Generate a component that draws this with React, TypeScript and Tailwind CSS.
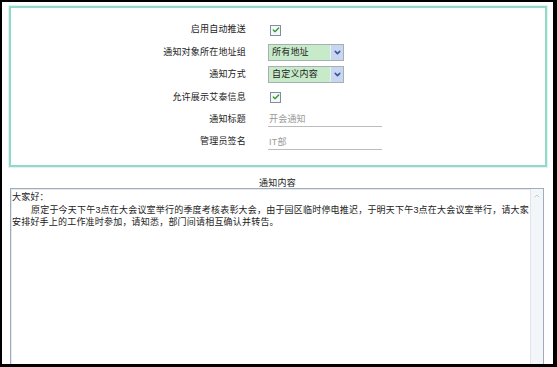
import { Check, ChevronDown, ChevronUp } from 'lucide-react'

const rows: Array<{ label: string; kind: 'check' | 'select' | 'input'; value?: string }> = [
  { label: '启用自动推送', kind: 'check' },
  { label: '通知对象所在地址组', kind: 'select', value: '所有地址' },
  { label: '通知方式', kind: 'select', value: '自定义内容' },
  { label: '允许展示艾泰信息', kind: 'check' },
  { label: '通知标题', kind: 'input', value: '开会通知' },
  { label: '管理员签名', kind: 'input', value: 'IT部' },
]

function CheckBox() {
  return (
    <div className="ml-[2px] w-[11px] h-[11px] border border-[#7f8fa0] bg-[#f4f6f8] flex items-center justify-center">
      <Check className="w-[8px] h-[8px] text-[#2f9a2f]" strokeWidth={4} />
    </div>
  )
}

function Select({ value }: { value: string }) {
  return (
    <div className="w-[76px] h-[17px] border border-[#a5afb5] bg-[#c7ebc9] flex items-center">
      <span className="flex-1 pl-[3px] leading-[15px] text-[#222]">{value}</span>
      <div className="w-[13px] h-[15px] bg-[#c9d7ee] border-l border-[#e8eef8] flex items-center justify-center">
        <ChevronDown className="w-[9px] h-[9px] text-[#3451a6]" strokeWidth={4} />
      </div>
    </div>
  )
}

function Field({ value }: { value: string }) {
  return (
    <div className="w-[114px] h-[15px] border-b border-[#bcbcbc] pl-[1px] leading-[14px] text-[#9a9a9a]">
      {value}
    </div>
  )
}

export default function App() {
  return (
    <div className="w-[557px] h-[367px] border-l-2 border-t-2 border-r-4 border-b-[3px] border-black bg-white overflow-hidden flex flex-col text-[9px] tracking-[0.2px] text-[#222] font-['Liberation_Sans','Noto_Sans_CJK_SC',sans-serif]">
      {/* settings box */}
      <div className="shrink-0 ml-[7px] mr-[6px] mt-[4px] h-[161px] border-2 border-[#92d8cb] pt-[11px] shadow-[0_0_0_1px_#e0f4f0]">
        {rows.map((r) => (
          <div key={r.label} className="flex items-center h-[22.4px]">
            <div className="w-[235px] text-right">{r.label}</div>
            <div className="ml-[22px]">
              {r.kind === 'check' && <CheckBox />}
              {r.kind === 'select' && <Select value={r.value!} />}
              {r.kind === 'input' && <Field value={r.value!} />}
            </div>
          </div>
        ))}
      </div>

      <div className="shrink-0 mt-[10px] h-[11px] leading-[12px] text-center">通知内容</div>

      {/* textarea */}
      <div className="ml-[8px] mr-[9px] h-[200px] shrink-0 border border-[#9fadbb] shadow-[inset_1px_1px_0_#e3e9ef] flex">
        <div className="flex-1 pl-[1px] pt-[2px] leading-[12.5px] whitespace-nowrap">
          <div>大家好：</div>
          <div className="pl-[19px]">原定于今天下午3点在大会议室举行的季度考核表彰大会，由于园区临时停电推迟，于明天下午3点在大会议室举行，请大家</div>
          <div>安排好手上的工作准时参加，请知悉，部门间请相互确认并转告。</div>
        </div>
        <div className="w-[13px] bg-[#f3f6f9] border-l border-[#dfe5eb] flex flex-col">
          <div className="h-[14px] flex items-center justify-center">
            <ChevronUp className="w-[8px] h-[8px] text-[#c3cbd3]" strokeWidth={3} />
          </div>
        </div>
      </div>
    </div>
  )
}
